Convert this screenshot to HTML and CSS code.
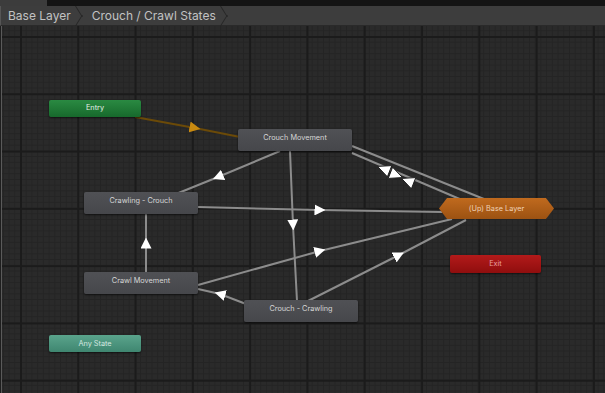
FILE: index.html
```html
<!DOCTYPE html>
<html lang="en">
<head>
  <meta charset="UTF-8">
  <title>Animator - Crouch / Crawl States</title>
  <link rel="stylesheet" href="styles.css">
</head>
<body>
  <div class="topstrip"><div class="tab-stub"></div></div>
  <div class="crumbs">
    <span class="crumb">Base Layer</span>
    <span class="chev"></span>
    <span class="crumb">Crouch / Crawl States</span>
    <span class="chev"></span>
  </div>
  <div class="graph">
    <svg class="edges" width="605" height="367" viewBox="0 26 605 367">
      <defs>
        <marker id="a" viewBox="0 0 10 10" refX="5" refY="5" markerWidth="11" markerHeight="11" markerUnits="userSpaceOnUse" orient="auto">
          <path d="M0 0 L10 5 L0 10 z" fill="#fff"/>
        </marker>
        <marker id="o" viewBox="0 0 10 10" refX="5" refY="5" markerWidth="11" markerHeight="11" markerUnits="userSpaceOnUse" orient="auto">
          <path d="M0 0 L10 5 L0 10 z" fill="#c98a10"/>
        </marker>
      </defs>
      <g stroke="#8c8c8c" stroke-width="2" fill="none">
        <!-- entry -->
        <polyline points="135,117 195,128 240,137" stroke="#6b4a08" marker-mid="url(#o)"/>
        <!-- crouch movement -> crawling crouch -->
        <polyline points="280,151 218,177 176,194" marker-mid="url(#a)"/>
        <!-- crouch movement -> crouch crawling -->
        <polyline points="290,151 293,225 297,301" marker-mid="url(#a)"/>
        <!-- crouch movement <-> base layer -->
        <line x1="352" y1="146" x2="484" y2="199"/>
        <line x1="352" y1="153" x2="462" y2="200"/>
        <!-- crawling crouch -> base layer -->
        <polyline points="198,207 320,210 442,212" marker-mid="url(#a)"/>
        <!-- crawl movement -> base layer -->
        <polyline points="198,285 320,251 452,219" marker-mid="url(#a)"/>
        <!-- crouch crawling -> base layer -->
        <polyline points="308,301 399,255 466,220" marker-mid="url(#a)"/>
        <!-- crouch crawling -> crawl movement -->
        <polyline points="246,304 220,294 198,289" marker-mid="url(#a)"/>
        <!-- crawl movement -> crawling crouch -->
        <polyline points="146,272 146,243 146,214" marker-mid="url(#a)"/>
      </g>
      <g fill="#fff" stroke="#1e1e1e" stroke-width="1" stroke-linejoin="round">
        <path d="M377.5 166.4 L387.4 176.8 L391.8 165.6 z"/>
        <path d="M402.5 177.6 L388.2 178.4 L392.6 167.2 z"/>
        <path d="M401.5 178.4 L411.4 188.8 L415.8 177.6 z"/>
      </g>
    </svg>

    <div class="node entry" style="left:47px; top:74px;">Entry</div>
    <div class="node state" style="left:236px; top:103px;">Crouch Movement</div>
    <div class="node state" style="left:82px; top:166px;">Crawling - Crouch</div>
    <div class="node parent" style="left:437px; top:172px;">(Up) Base Layer</div>
    <div class="node exit" style="left:448px; top:229px;">Exit</div>
    <div class="node state" style="left:82px; top:246px;">Crawl Movement</div>
    <div class="node state" style="left:242px; top:274px;">Crouch - Crawling</div>
    <div class="node any" style="left:47px; top:309px;">Any State</div>
  </div>
</body>
</html>
```

FILE: styles.css
```css
html,
body {
  margin: 0;
  padding: 0;
  width: 605px;
  height: 393px;
  overflow: hidden;
  background-color: #1e1e1e;
  font-family: Inter, 'Noto Sans', 'Liberation Sans', sans-serif;
}

.topstrip {
  height: 6px;
  background-color: #141414;
  display: flex;
}

.tab-stub {
  width: 47px;
  background-color: #3c3c3c;
}

.crumbs {
  height: 20px;
  background-color: #3d3d3d;
  border-bottom: 1px solid #2a2a2a;
  display: flex;
  align-items: center;
  padding-left: 7px;
  box-sizing: border-box;
  border-left: 1px solid #555555;
}

.crumb {
  color: #c2c2c2;
  font-size: 12px;
}

.chev {
  width: 9px;
  height: 20px;
  margin: 0 9px 0 3px;
  position: relative;
}

.chev::before,
.chev::after {
  content: "";
  position: absolute;
  left: 1px;
  width: 1px;
  height: 11px;
  background-color: #262626;
}

.chev::before {
  top: 0;
  transform-origin: top left;
  transform: skewX(32deg);
}

.chev::after {
  bottom: 0;
  transform-origin: bottom left;
  transform: skewX(-32deg);
}

.graph {
  position: relative;
  height: 367px;
  border-left: 1px solid #5a5a5a;
  margin-left: 1px;
  background-color: #2a2a2a;
  background-image:
    linear-gradient(to right, #1b1b1b 2px, transparent 2px),
    linear-gradient(to bottom, #1b1b1b 2px, transparent 2px),
    linear-gradient(to right, #242424 1px, transparent 1px),
    linear-gradient(to bottom, #242424 1px, transparent 1px);
  background-size: 57.3px 57.3px, 57.3px 57.3px, 5.73px 5.73px, 5.73px 5.73px;
  background-position: 18px 10px, 18px 10px, 18px 10px, 18px 10px;
}

.edges {
  position: absolute;
  left: -2px;
  top: 0;
}

.node {
  position: absolute;
  width: 114px;
  height: 22px;
  box-sizing: border-box;
  padding-top: 4px;
  border-radius: 2px;
  text-align: center;
  font-size: 7.3px;
  color: #d6d6d6;
  background: linear-gradient(#505155, #46474b);
  box-shadow: 0 1px 2px rgba(0, 0, 0, 0.6);
}

.entry {
  width: 92px;
  height: 17px;
  padding-top: 3px;
  background: linear-gradient(#2a8a42, #17692c);
  color: #e6f0e8;
}

.any {
  width: 92px;
  height: 17px;
  padding-top: 4px;
  background: linear-gradient(#5aa48c, #3f8670);
  color: #d4e8e0;
}

.exit {
  width: 91px;
  height: 18px;
  padding-top: 4px;
  background: linear-gradient(#b31a1a, #8f0e0e);
  color: #e8a0a0;
}

.parent {
  width: 115px;
  height: 21px;
  padding-top: 6px;
  background: linear-gradient(#c06a1e, #9c5212);
  color: #efd2b6;
  border-radius: 0;
  box-shadow: none;
  clip-path: polygon(7% 0, 93% 0, 100% 50%, 93% 100%, 7% 100%, 0 50%);
}
```
